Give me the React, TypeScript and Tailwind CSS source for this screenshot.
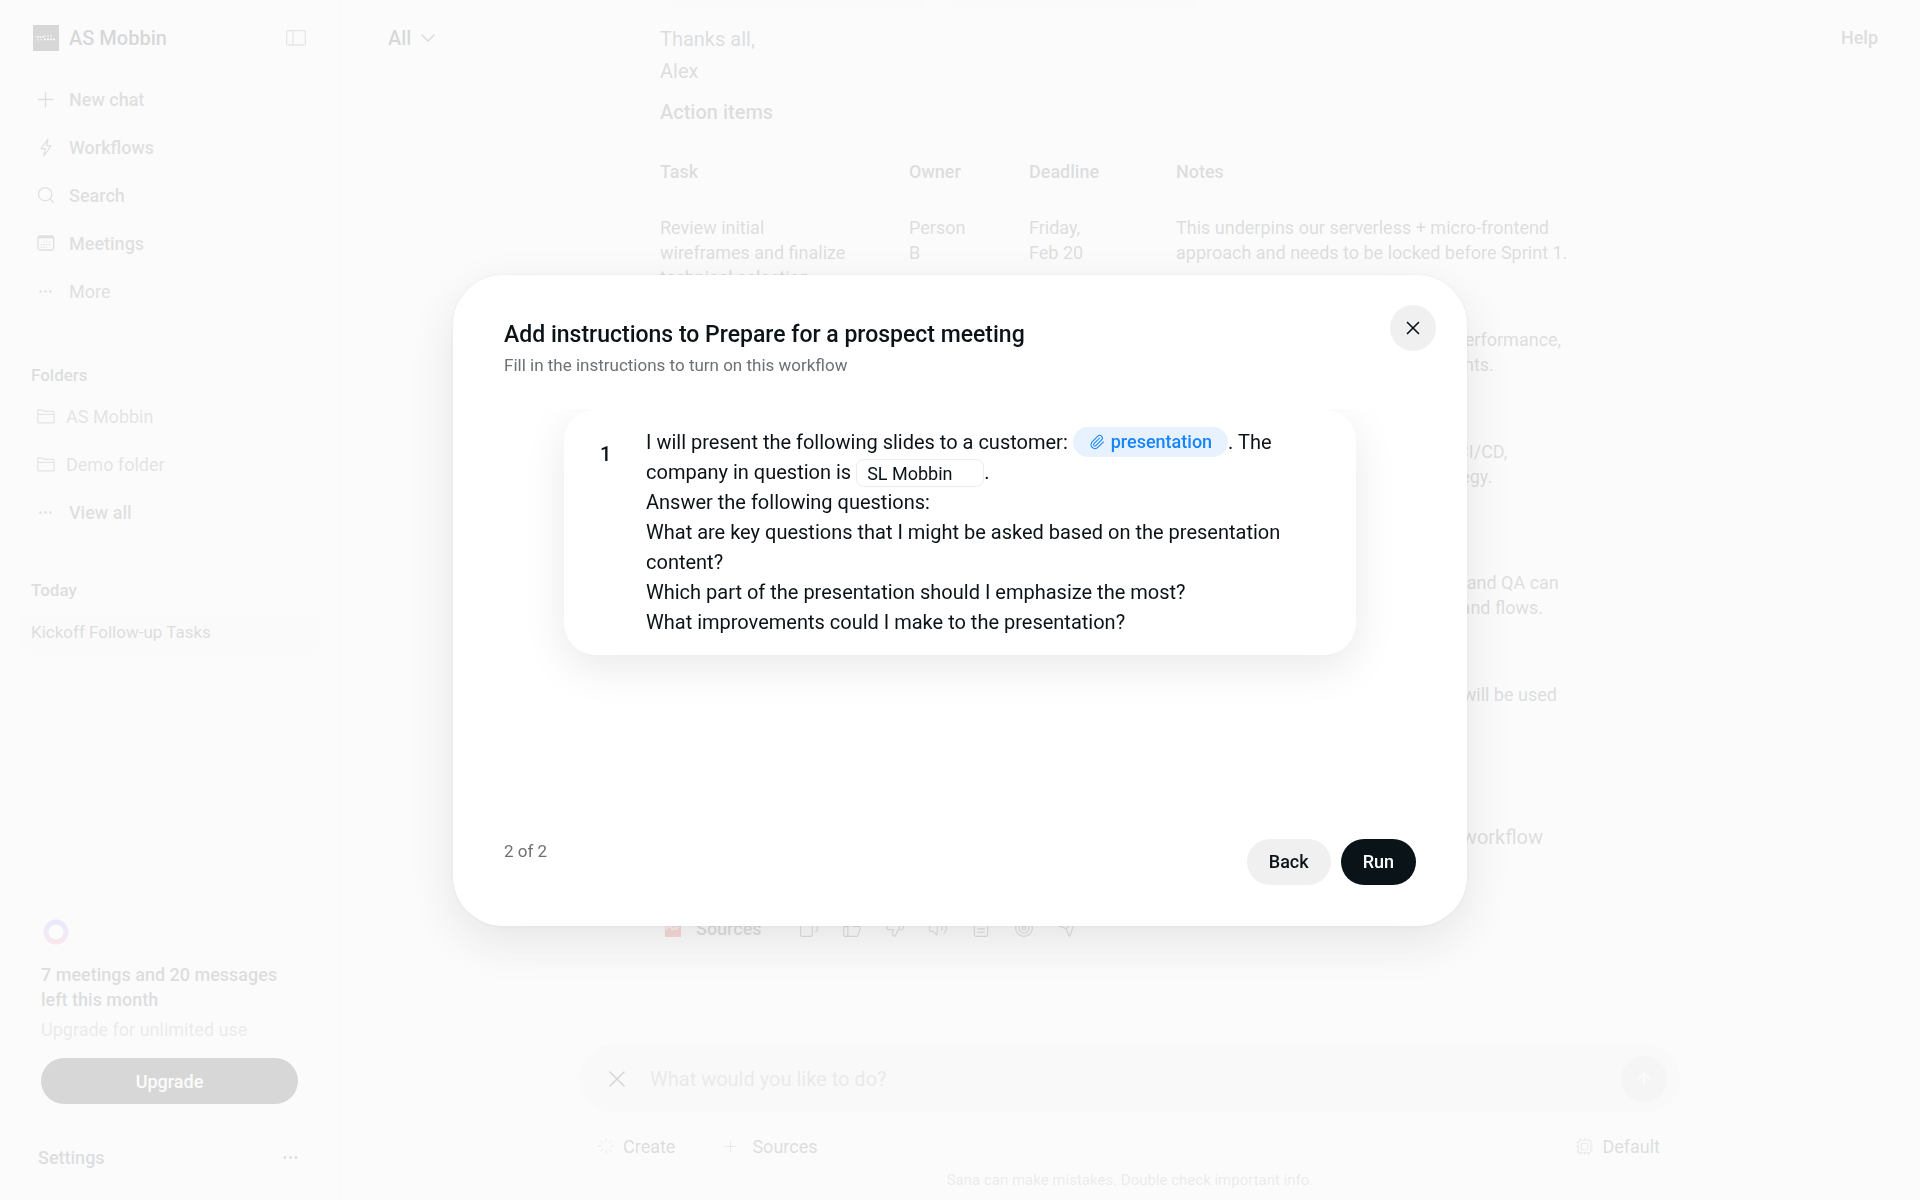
import type { ReactNode } from "react";
import { useState } from "react";
import {
  ArrowUp,
  ChevronDown,
  Copy,
  Cpu,
  Ellipsis,
  FileText,
  Loader,
  Paperclip,
  Plus,
  Search,
  Send,
  Target,
  ThumbsDown,
  ThumbsUp,
  Volume2,
  X,
} from "lucide-react";

function PanelIcon() {
  return (
    <svg width="20" height="16" viewBox="0 0 20 16" fill="none" stroke="currentColor" strokeWidth="1.3">
      <rect x="0.6" y="0.6" width="18.8" height="14.4" rx="1.2" />
      <path d="M7 0.6V15" />
    </svg>
  );
}

function BoltIcon() {
  return (
    <svg width="12" height="19" viewBox="0 0 12 19" fill="none" stroke="currentColor" strokeWidth="1.2" strokeLinejoin="round">
      <path d="M8 1L1 10.6H5.2L3.8 18L11 7.8H6.6L8 1Z" />
    </svg>
  );
}

function CalendarIcon() {
  return (
    <svg width="18" height="16" viewBox="0 0 18 16" fill="none" stroke="currentColor" strokeWidth="1.3">
      <rect x="1" y="1" width="15.6" height="14" rx="2" />
      <path d="M1.4 2.2h14.8" strokeWidth="2.2" />
      <path d="M6.4 7h7M4 9.6h9.4M4 12.2h6.6" strokeWidth="1.2" strokeDasharray="1.2 1.4" />
    </svg>
  );
}

function FolderIcon() {
  return (
    <svg width="18" height="15" viewBox="0 0 18 15" fill="none" stroke="currentColor" strokeWidth="1.2">
      <path d="M0.8 12.6V2.2C0.8 1.4 1.3 0.9 2 0.9H5.2L7 2.4H15.8C16.6 2.4 17.1 2.9 17.1 3.6V12.6C17.1 13.4 16.6 13.9 15.8 13.9H2C1.3 13.9 0.8 13.4 0.8 12.6Z" />
      <path d="M0.8 5.4H17.1" />
    </svg>
  );
}

function WorkspaceLogo() {
  return (
    <span className="flex h-[26px] w-[26px] items-center justify-center bg-[#131313]">
      <svg width="20" height="8" viewBox="0 0 20 8" stroke="#ffffff" strokeWidth="1.6" strokeDasharray="2 1">
        <path d="M0.5 3H8M8 5.4H19.5" />
        <path d="M8 2H16M1 5.8H7" strokeWidth="0.8" />
      </svg>
    </span>
  );
}

function UsageRing() {
  return (
    <svg width="30" height="26" viewBox="0 0 30 26" fill="none">
      <defs>
        <linearGradient id="ring" x1="15" y1="0" x2="15" y2="26" gradientUnits="userSpaceOnUse">
          <stop offset="0" stopColor="#8a7cff" />
          <stop offset="0.55" stopColor="#b88ae0" />
          <stop offset="1" stopColor="#ff6c8c" />
        </linearGradient>
      </defs>
      <circle cx="15" cy="13" r="10" stroke="url(#ring)" strokeWidth="5" />
    </svg>
  );
}

const navItems = [
  { name: "New chat", icon: <Plus size={25} strokeWidth={1.3} />, strong: true },
  { name: "Workflows", icon: <BoltIcon />, strong: true },
  { name: "Search", icon: <Search size={20} strokeWidth={1.5} />, strong: true },
  { name: "Meetings", icon: <CalendarIcon />, strong: true },
  { name: "More", icon: <Ellipsis size={17} strokeWidth={1.6} />, strong: false },
];

const folders = ["AS Mobbin", "Demo folder"];

const rows = [
  {
    task: "Review initial wireframes and finalize technical selection",
    owner: "Person B",
    deadline: "Friday, Feb 20",
    notes: ["This underpins our serverless + micro-frontend", "approach and needs to be locked before Sprint 1."],
    height: "h-[112px]",
  },
  {
    task: "Refine the backlog",
    owner: "Person A",
    deadline: "Friday, Feb 20",
    notes: ["Cover the goals of scaling, uptime, performance,", "and the service compliance constraints."],
    height: "h-[112px]",
  },
  {
    task: "Set up environments",
    owner: "Person C",
    deadline: "Monday, Feb 23",
    notes: ["Staging and production, along with CI/CD,", "monitoring and sound rollback strategy."],
    height: "h-[131px]",
  },
  {
    task: "Share design drafts",
    owner: "Person D",
    deadline: "Tuesday, Feb 24",
    notes: ["Needed early so that the developers and QA can", "begin to prepare all their test cases and flows."],
    height: "h-[112px]",
  },
  {
    task: "Write the test plan",
    owner: "Person E",
    deadline: "Friday, Feb 27",
    notes: ["The plan covers the release set and will be used", "for sign-off."],
    height: "h-[112px]",
  },
];

const messageActions = [
  { name: "Copy", icon: <Copy size={20} strokeWidth={1.3} className="-scale-x-100" /> },
  { name: "Good response", icon: <ThumbsUp size={20} strokeWidth={1.3} /> },
  { name: "Bad response", icon: <ThumbsDown size={20} strokeWidth={1.3} /> },
  { name: "Read aloud", icon: <Volume2 size={22} strokeWidth={1.3} /> },
  { name: "Save as document", icon: <FileText size={20} strokeWidth={1.3} /> },
  { name: "Create task", icon: <Target size={20} strokeWidth={1.3} /> },
  { name: "Send", icon: <Send size={20} strokeWidth={1.3} /> },
];

function NavButton({ icon, children, className }: { icon: ReactNode; children: ReactNode; className: string }) {
  return (
    <button type="button" className={`flex h-12 items-center pl-8 text-left text-[18px] ${className}`}>
      <span className="flex w-[27px] justify-center">{icon}</span>
      {children}
    </button>
  );
}

function Sidebar() {
  return (
    <aside className="flex w-[340px] shrink-0 flex-col border-r border-[#f2f2f2]">
      <div className="flex h-[75px] items-center pr-[33px] pl-[33px]">
        <WorkspaceLogo />
        <span className="ml-[10px] text-[20px] font-medium text-[#0c1317]">AS Mobbin</span>
        <button type="button" aria-label="Toggle sidebar" className="ml-auto text-[#70757a]">
          <PanelIcon />
        </button>
      </div>

      <nav className="flex flex-col">
        {navItems.map(({ name, icon, strong }) => (
          <NavButton key={name} icon={icon} className={strong ? "font-medium text-[#43484c]" : "text-[#43484c]"}>
            <span className="ml-[10px]">{name}</span>
          </NavButton>
        ))}
      </nav>

      <h2 className="mt-12 pl-[31px] text-[17px] leading-6 font-medium text-[#33383c]">Folders</h2>
      <div className="mt-[5px] flex flex-col">
        {folders.map((name) => (
          <NavButton key={name} icon={<FolderIcon />} className="text-[#5c6165]">
            <span className="ml-[7px]">{name}</span>
          </NavButton>
        ))}
        <NavButton icon={<Ellipsis size={17} strokeWidth={1.6} />} className="font-medium text-[#43484c]">
          <span className="ml-[10px]">View all</span>
        </NavButton>
      </div>

      <h2 className="mt-[42px] pl-[31px] text-[17px] leading-6 font-medium text-[#33383c]">Today</h2>
      <button
        type="button"
        className="mx-[18px] mt-[7px] h-12 rounded-2xl bg-[#f5f5f5] pl-[13px] text-left text-[17px] text-[#33383c]"
      >
        Kickoff Follow-up Tasks
      </button>

      <div className="mt-auto px-[41px]">
        <UsageRing />
        <p className="mt-[17px] text-[18px] leading-[25px] font-medium text-[#33383c]">
          7 meetings and 20 messages left this month
        </p>
        <p className="mt-[6px] text-[18px] leading-6 text-[#8c9094]">Upgrade for unlimited use</p>
        <button
          type="button"
          className="mt-4 h-[46px] w-full rounded-full bg-[#131313] text-[18px] font-medium text-white"
        >
          Upgrade
        </button>
      </div>
      <div className="mt-7 mb-[18px] flex h-[50px] items-center justify-between pr-[39px] pl-[38px] text-[18px] font-medium text-[#33383c]">
        <button type="button">Settings</button>
        <button type="button" aria-label="More options">
          <Ellipsis size={19} strokeWidth={1.6} />
        </button>
      </div>
    </aside>
  );
}

function Thread() {
  return (
    <article className="min-h-0 flex-1 overflow-hidden px-20 text-[20px] text-[#33383c]">
      <div className="-mt-[26px] flex gap-5 pl-1">
        <span className="flex h-9 items-center rounded-lg bg-[#f4f4f4] px-3 text-[15px] font-medium">
          Minutes of Meeting Project Alpha...
        </span>
        <span className="flex h-9 items-center rounded-lg bg-[#f4f4f4] px-3 text-[15px] font-medium">
          Minutes of Meeting Project Beta...
        </span>
      </div>
      <p className="mt-[13px] leading-8">
        Thanks all,
        <br />
        Alex
      </p>
      <h3 className="mt-[9px] leading-8 font-medium">Action items</h3>

      <table className="mt-[18px] w-full table-fixed text-left text-[18px] leading-[25px]">
        <thead>
          <tr className="h-[51px]">
            <th className="w-[249px] font-medium">Task</th>
            <th className="w-[120px] font-medium">Owner</th>
            <th className="w-[147px] font-medium">Deadline</th>
            <th className="font-medium">Notes</th>
          </tr>
        </thead>
        <tbody>
          {rows.map((row) => (
            <tr key={row.task} className={`${row.height} align-top`}>
              <td className="py-[18px] pr-15">{row.task}</td>
              <td className="py-[18px] pr-14">{row.owner}</td>
              <td className="py-[18px] pr-16">{row.deadline}</td>
              <td className="py-[18px] whitespace-nowrap">
                {row.notes.map((line) => (
                  <p key={line}>{line}</p>
                ))}
              </td>
            </tr>
          ))}
        </tbody>
      </table>

      <p className="mt-[45px] leading-8">
        Would you like me to assign all these action items with everyone or set up a new follow-up workflow
      </p>

      <div className="mt-[59px] flex h-8 items-center gap-[23px] pl-[5px]">
        <button type="button" className="flex items-center text-[18px] font-medium">
          <span className="mr-[15px] flex h-[18px] w-4 items-center justify-center bg-[#e02020] text-[8px] leading-none font-medium text-white">
            PDF
          </span>
          Sources
        </button>
        <div className="ml-[14px] flex items-center gap-[23px]">
          {messageActions.map(({ name, icon }) => (
            <button key={name} type="button" aria-label={name} className="flex w-5 justify-center">
              {icon}
            </button>
          ))}
        </div>
      </div>
    </article>
  );
}

function Composer() {
  return (
    <footer className="mt-5 text-[18px] text-[#33383c]">
      <form className="flex h-[69px] items-center rounded-full bg-[#ededed] pr-[13px] pl-[23px]">
        <button type="button" aria-label="Clear" className="text-[#0c1317]">
          <X size={28} strokeWidth={1.3} />
        </button>
        <input
          type="text"
          aria-label="Message"
          placeholder="What would you like to do?"
          className="ml-[19px] flex-1 bg-transparent text-[20px] placeholder-[#85898d] outline-none"
        />
        <button
          type="submit"
          aria-label="Send message"
          className="flex h-[46px] w-[46px] items-center justify-center rounded-full bg-[#d4d4d4] text-white"
        >
          <ArrowUp size={20} strokeWidth={2} />
        </button>
      </form>
      <div className="mt-[19px] flex h-7 items-center pr-5 pl-[17px]">
        <button type="button" className="flex items-center gap-2">
          <Loader size={18} strokeWidth={1.3} className="text-[#85898d]" />
          Create
        </button>
        <button type="button" className="ml-[46px] flex items-center gap-3">
          <Plus size={19} strokeWidth={1.3} className="text-[#85898d]" />
          Sources
        </button>
        <button type="button" className="ml-auto flex items-center gap-2">
          <Cpu size={19} strokeWidth={1.3} className="text-[#85898d]" />
          Default
        </button>
      </div>
      <p className="mt-2 mb-2 text-center text-[15px] leading-6 text-[#8c9094]">
        Sana can make mistakes. Double check important info.
      </p>
    </footer>
  );
}

function WorkflowDialog() {
  const [company, setCompany] = useState("SL Mobbin");

  return (
    <section
      role="dialog"
      aria-modal="true"
      aria-labelledby="dialog-title"
      className="relative flex min-h-[651px] w-full max-w-[1014px] flex-col rounded-[50px] bg-white px-[51px] pt-[45px] pb-[41px] text-[#0c1317] shadow-[0_16px_48px_rgba(0,0,0,0.09),0_0_3px_rgba(0,0,0,0.06)]"
    >
      <button
        type="button"
        aria-label="Close"
        className="absolute top-[30px] right-[31px] flex h-[46px] w-[46px] items-center justify-center rounded-full bg-[#f0f0f0]"
      >
        <X size={22} strokeWidth={1.8} />
      </button>
      <h1 id="dialog-title" className="text-[23px] leading-[30px] font-medium">
        Add instructions to Prepare for a prospect meeting
      </h1>
      <p className="mt-[3px] text-[17px] leading-6 text-[#6d7174]">Fill in the instructions to turn on this workflow</p>

      <div className="mt-8 flex-1 overflow-hidden px-[60px] pb-16">
        <div className="flex rounded-[32px] bg-white pt-[18px] pr-12 pb-[18px] pl-9 text-[20px] leading-[30px] shadow-[0_12px_44px_rgba(0,0,0,0.09)]">
          <span className="mt-3 w-[46px] shrink-0 font-medium">1</span>
          <div>
            <p>
              I will present the following slides to a customer:{" "}
              <button
                type="button"
                className="inline-flex h-[30px] items-center gap-[6px] rounded-full bg-[#e8f2ff] px-4 align-top text-[18px] font-medium text-[#1585ff]"
              >
                <Paperclip size={16} strokeWidth={1.6} />
                presentation
              </button>
              . The company in question is{" "}
              <input
                type="text"
                aria-label="Company"
                value={company}
                onChange={(e) => setCompany(e.target.value)}
                className="h-7 w-32 rounded-lg border border-[#ececec] px-[10px] align-middle text-[18px] leading-6"
              />
              .
            </p>
            <p>Answer the following questions:</p>
            <p>What are key questions that I might be asked based on the presentation content?</p>
            <p>Which part of the presentation should I emphasize the most?</p>
            <p>What improvements could I make to the presentation?</p>
          </div>
        </div>
      </div>

      <div className="flex items-start justify-between">
        <span className="text-[17px] leading-6 text-[#6d7174]">2 of 2</span>
        <div className="flex gap-[10px] text-[18px] font-medium">
          <button type="button" className="h-[46px] rounded-full bg-[#f0f0f0] px-[22px]">
            Back
          </button>
          <button type="button" className="h-[46px] rounded-full bg-[#0a1317] px-[22px] text-white">
            Run
          </button>
        </div>
      </div>
    </section>
  );
}

export default function App() {
  return (
    <div className="flex h-screen overflow-hidden bg-white font-['Roboto',sans-serif]">
      <Sidebar />
      <main className="grid min-w-0 flex-1 grid-cols-[1fr_minmax(0,1100px)_1fr]">
        <div className="flex h-[75px] items-center pl-12">
          <button type="button" className="flex items-center gap-[5px] text-[20px] font-medium text-[#0c1317]">
            All
            <ChevronDown size={24} strokeWidth={1.3} />
          </button>
        </div>
        <div className="flex h-screen flex-col">
          <Thread />
          <Composer />
        </div>
        <div className="flex h-[75px] items-center justify-end pr-[42px]">
          <a href="#help" className="text-[18px] font-medium text-[#33383c]">
            Help
          </a>
        </div>
      </main>

      <div className="fixed inset-0 flex items-center justify-center bg-[#fafafa]/85">
        <WorkflowDialog />
      </div>
    </div>
  );
}
